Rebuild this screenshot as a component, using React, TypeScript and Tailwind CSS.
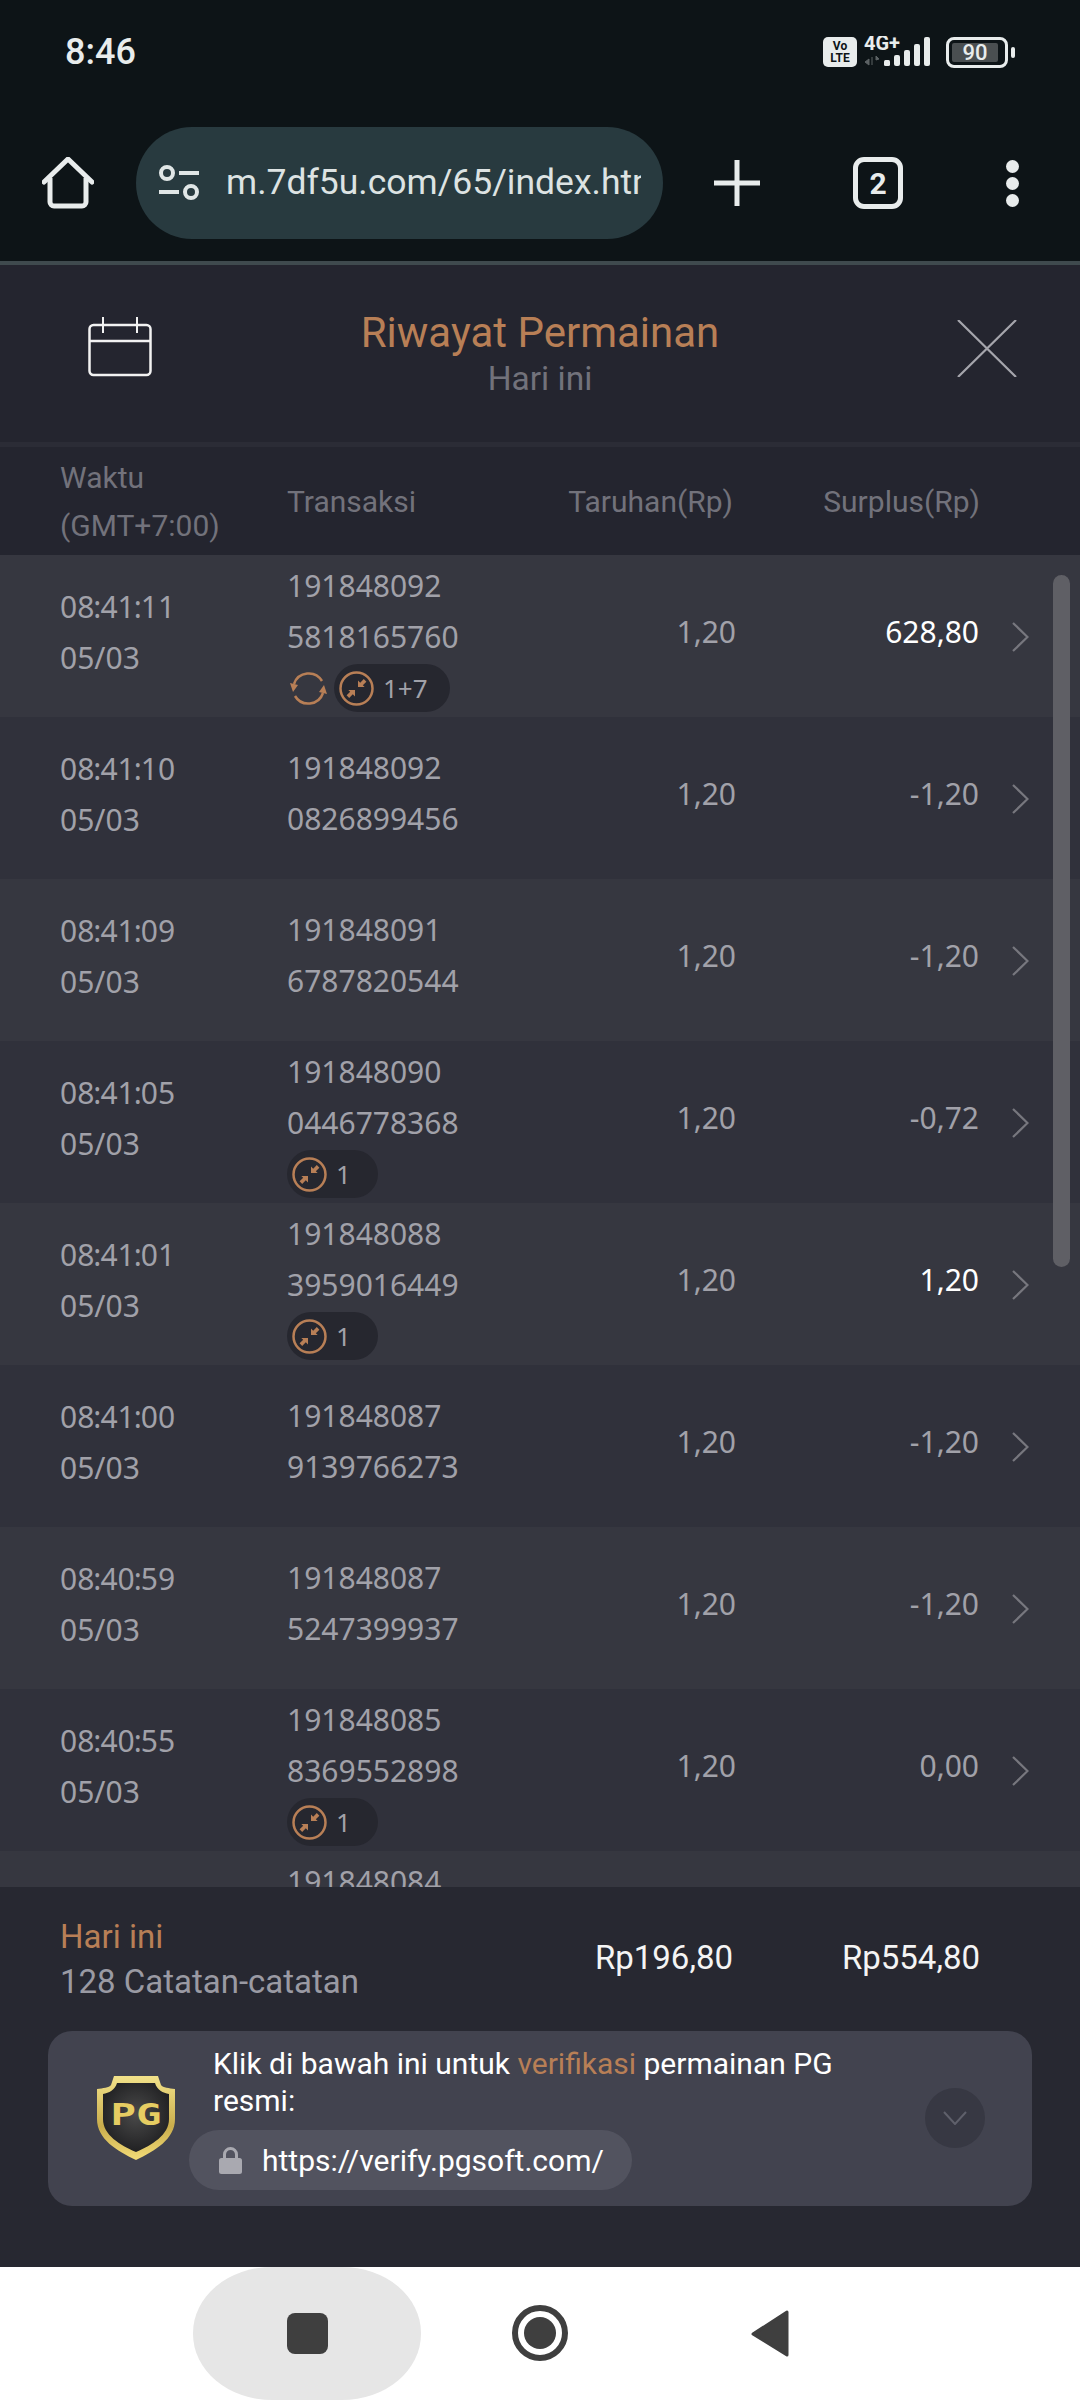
import React from "react";

type Row = { time: string; a: string; b: string; surplus: string; win?: boolean; pill?: string; retrigger?: boolean };

const rows: Row[] = [
  { time: "08:41:11", a: "191848092", b: "5818165760", surplus: "628,80", win: true, pill: "1+7", retrigger: true },
  { time: "08:41:10", a: "191848092", b: "0826899456", surplus: "-1,20" },
  { time: "08:41:09", a: "191848091", b: "6787820544", surplus: "-1,20" },
  { time: "08:41:05", a: "191848090", b: "0446778368", surplus: "-0,72", pill: "1" },
  { time: "08:41:01", a: "191848088", b: "3959016449", surplus: "1,20", win: true, pill: "1" },
  { time: "08:41:00", a: "191848087", b: "9139766273", surplus: "-1,20" },
  { time: "08:40:59", a: "191848087", b: "5247399937", surplus: "-1,20" },
  { time: "08:40:55", a: "191848085", b: "8369552898", surplus: "0,00", pill: "1" },
  { time: "08:40:54", a: "191848084", b: "4521907736", surplus: "-1,20", pill: "1" },
];

const StatusIcons = () => (
  <div className="flex items-center">
    <div className="flex h-[30px] w-[34px] flex-col items-center justify-center rounded-[5px] bg-[#e8ecec] font-['Roboto',sans-serif] text-[12px] leading-[12px] font-bold text-[#0d1417]">
      <span>Vo</span>
      <span>LTE</span>
    </div>
    <svg width="66" height="32" viewBox="0 0 66 32" className="ml-[7px]">
      <text x="0" y="14" fontFamily="Roboto, sans-serif" fontSize="20" fontWeight="700" fill="#e8ecec">4G+</text>
      <path d="M5 23v6l-4-3zM8 21v8M12 20l3 3-3 1z" fill="#5c6265" stroke="#5c6265" strokeWidth="1" />
      <rect x="20" y="24" width="6" height="6" rx="1.5" fill="#e8ecec" />
      <rect x="30" y="19" width="6" height="11" rx="2" fill="#e8ecec" />
      <rect x="40" y="14" width="6" height="16" rx="2" fill="#e8ecec" />
      <rect x="50" y="8" width="6" height="22" rx="2" fill="#e8ecec" />
      <rect x="60" y="1" width="6" height="29" rx="2" fill="#e8ecec" />
    </svg>
    <div className="ml-[16px] flex h-[31px] w-[62px] items-center rounded-[8px] border-[3px] border-[#e8ecec] p-[3px]">
      <div className="flex h-full w-[46px] items-center justify-center rounded-[2px] bg-[#4a4f51] font-['Roboto',sans-serif] text-[22px] font-medium text-[#e8ecec]">90</div>
    </div>
    <div className="ml-[3px] h-[11px] w-[4px] rounded-full bg-[#e8ecec]" />
  </div>
);

const BrowserBar = () => (
  <div className="flex h-[135px] items-start bg-[#0d1417] font-['Roboto',sans-serif]">
    <div className="flex w-[136px] justify-center pt-[30px]">
      <svg width="52" height="52" viewBox="0 0 52 52" fill="none">
        <path d="M2 25 26 2l24 23" stroke="#e8ecec" strokeWidth="5" strokeLinecap="round" strokeLinejoin="round" />
        <path d="M8 21v24a4 4 0 0 0 4 4h28a4 4 0 0 0 4-4V21" stroke="#e8ecec" strokeWidth="5" strokeLinejoin="round" />
      </svg>
    </div>
    <div className="flex h-[112px] w-[527px] items-center overflow-hidden rounded-full bg-[#283a3f] pr-[22px] pl-[22px]">
      <svg width="44" height="36" viewBox="0 0 44 36" fill="none" className="shrink-0">
        <circle cx="9" cy="8" r="6" stroke="#e0e6e6" strokeWidth="4" />
        <path d="M21 8h20M1 27h20" stroke="#e0e6e6" strokeWidth="4" />
        <circle cx="33" cy="27" r="6" stroke="#e0e6e6" strokeWidth="4" />
      </svg>
      <span className="ml-[24px] overflow-hidden text-[35.500px] whitespace-nowrap text-[#dde3e3]">m.7df5u.com/65/index.html</span>
    </div>
    <div className="flex h-[112px] w-[148px] items-center justify-center">
      <svg width="46" height="46" viewBox="0 0 46 46"><path d="M23 0v46M0 23h46" stroke="#e8ecec" strokeWidth="5" strokeLinecap="round" /></svg>
    </div>
    <div className="flex h-[112px] w-[134px] items-center justify-center">
      <div className="flex h-[52px] w-[50px] shrink-0 items-center justify-center rounded-[11px] border-[5px] border-[#e8ecec] text-[30px] font-bold text-[#e8ecec]">2</div>
    </div>
    <div className="flex h-[112px] w-[134px] flex-col items-center justify-center gap-[4px]">
      <div className="h-[13px] w-[13px] rounded-full bg-[#e8ecec]" />
      <div className="h-[13px] w-[13px] rounded-full bg-[#e8ecec]" />
      <div className="h-[13px] w-[13px] rounded-full bg-[#e8ecec]" />
    </div>
  </div>
);

const SpinIcon = () => (
  <svg width="37" height="37" viewBox="0 0 37 37" fill="none">
    <path d="M4 14A15.5 15.5 0 0 1 32 11" stroke="#b87f56" strokeWidth="2.5" />
    <path d="M33 23A15.5 15.5 0 0 1 5 26" stroke="#b87f56" strokeWidth="2.5" />
    <path d="M0 13l8 2-5 7zM37 24l-8-2 5-7z" fill="#b87f56" />
  </svg>
);

const FreeIcon = () => (
  <svg width="35" height="35" viewBox="0 0 35 35" fill="none">
    <circle cx="17.5" cy="17.5" r="16" stroke="#b87f56" strokeWidth="2.5" />
    <path d="M19 16V9.5l2.2 2.2 3.6-3.6 2.6 2.6-3.6 3.6 1.9 1.700zM16 19v6.500l-2.200-2.200-3.600 3.600-2.600-2.600 3.600-3.600-1.900-1.700z" fill="#b87f56" />
  </svg>
);

const Chevron = () => (
  <svg width="17" height="30" viewBox="0 0 17 30" fill="none">
    <path d="M1 1l14.500 14L1 29" stroke="#77777e" strokeWidth="2.200" />
  </svg>
);

const Time = ({ value }: { value: string }) => {
  const [h, m, s] = value.split(":");
  return (
    <div>
      {h}
      <span className="mx-[-1px]">:</span>
      {m}
      <span className="mx-[-1px]">:</span>
      {s}
    </div>
  );
};

const TableRow = ({ row, index }: { row: Row; index: number }) => (
  <div className={`flex h-[162px] shrink-0 items-center pl-[60px] font-['Noto_Sans',sans-serif] text-[30px] leading-[51px] text-[#a1a1a9] ${index % 2 === 0 ? "bg-[#363740]" : "bg-[#30313b]"}`}>
    <div className="w-[227px] pb-[8px]">
      <Time value={row.time} />
      <div>05/03</div>
    </div>
    <div className={`w-[190px] ${row.pill ? "" : "pb-[10px]"}`}>
      <div>{row.a}</div>
      <div>{row.b}</div>
      {row.pill && (
        <div className="mt-[2px] flex h-[48px] items-center">
          {row.retrigger && (
            <div className="mr-[7px] ml-[3px]"><SpinIcon /></div>
          )}
          <div className={`flex h-[48px] shrink-0 items-center rounded-full bg-[#26272f] pl-[5px] text-[26px] ${row.pill === "1" ? "w-[91px]" : "w-[116px]"}`}>
            <FreeIcon />
            <span className="ml-[9px]">{row.pill}</span>
          </div>
        </div>
      )}
    </div>
    <div className="w-[259px] pb-[10px] text-right">1,20</div>
    <div className={`w-[243px] pb-[10px] text-right ${row.win ? "text-white" : ""}`}>{row.surplus}</div>
    <div className="ml-[33px] flex pt-[2px]"><Chevron /></div>
  </div>
);

const Shield = () => (
  <svg width="78" height="85" viewBox="0 0 78 85">
    <defs>
      <linearGradient id="gold" x1="0" y1="0" x2="0" y2="1">
        <stop offset="0" stopColor="#f2e28a" />
        <stop offset="0.6" stopColor="#c9ad4c" />
        <stop offset="1" stopColor="#f3dc78" />
      </linearGradient>
      <radialGradient id="dark" cx="0.5" cy="0.45" r="0.6">
        <stop offset="0" stopColor="#4a4a4a" />
        <stop offset="1" stopColor="#1d1d1f" />
      </radialGradient>
    </defs>
    <path d="M17 1h44l3 9c2 3 8 3 14 4v30c0 20-20 32-39 41C20 76 0 64 0 44V14c6-1 12-1 14-4z" fill="url(#gold)" />
    <path d="M20 8h38c2 7 8 10 14 11v25c0 16-17 26-33 33C23 70 6 60 6 44V19c6-1 12-4 14-11z" fill="url(#dark)" />
    <text x="39" y="50" textAnchor="middle" fontFamily="'DejaVu Sans Mono', monospace" fontSize="31" fontWeight="700" textLength="51" lengthAdjust="spacingAndGlyphs" fill="#e6cd62">PG</text>
  </svg>
);

export default function App() {
  return (
    <div className="relative flex h-[2400px] w-[1080px] flex-col overflow-hidden bg-[#24252f]">
      <div className="flex h-[127px] shrink-0 items-start justify-between bg-[#0d1417] pt-[32px] pr-[65px] pl-[65px]">
        <span className="font-['Roboto',sans-serif] text-[36px] leading-[40px] font-medium text-[#e8ecec]">8:46</span>
        <div className="pt-[4px]"><StatusIcons /></div>
      </div>
      <BrowserBar />
      <div className="h-[4px] shrink-0 bg-[#3f4a4e]" />

      <div className="relative flex h-[177px] shrink-0 flex-col items-center bg-[#24252f] pt-[45px] font-['Roboto',sans-serif]">
        <div className="text-[42px] leading-[46px] text-[#b87f56]">Riwayat Permainan</div>
        <div className="text-[33.500px] leading-[46px] text-[#72727b]">Hari ini</div>
        <svg width="64" height="60" viewBox="0 0 64 60" fill="none" className="absolute top-[52px] left-[88px]">
          <rect x="1.500" y="8" width="61" height="50" rx="4" stroke="#f2f2f2" strokeWidth="2.500" />
          <path d="M1.500 24h61" stroke="#f2f2f2" strokeWidth="2.500" />
          <path d="M15 0v16M49 0v16" stroke="#f2f2f2" strokeWidth="2" />
        </svg>
        <svg width="60" height="57" viewBox="0 0 60 57" fill="none" className="absolute top-[55px] left-[957px]">
          <path d="M1 0l58 57M59 0L1 57" stroke="#a5a5ac" strokeWidth="2.200" />
        </svg>
      </div>
      <div className="h-[5px] shrink-0 bg-[#2b2c36]" />

      <div className="flex h-[108px] shrink-0 items-center bg-[#24252f] pt-[2px] pl-[60px] font-['Roboto',sans-serif] text-[30px] leading-[48px] text-[#72727b]">
        <div className="w-[227px]">
          <div>Waktu</div>
          <div>(GMT+7:00)</div>
        </div>
        <div className="w-[190px]">Transaksi</div>
        <div className="w-[256px] text-right">Taruhan(Rp)</div>
        <div className="w-[247px] text-right">Surplus(Rp)</div>
      </div>

      <div className="relative h-[1332px] shrink-0 overflow-hidden">
        <div className="flex flex-col">
          {rows.map((row, i) => (
            <TableRow key={row.time} row={row} index={i} />
          ))}
        </div>
        <div className="absolute top-[20px] left-[1053px] h-[692px] w-[17px] rounded-full bg-[#5f5f65]" />
      </div>

      <div className="flex h-[380px] shrink-0 flex-col bg-[#272831] px-[48px] font-['Roboto',sans-serif]">
        <div className="flex h-[144px] shrink-0 items-center pl-[12px] text-[33px] leading-[45px]">
          <div className="w-[417px]">
            <div className="text-[#b87f56]">Hari ini</div>
            <div className="text-[#9a9aa3]">128 Catatan-catatan</div>
          </div>
          <div className="w-[256px] pb-[4px] text-right text-[#f4f4f4]">Rp196,80</div>
          <div className="w-[247px] pb-[4px] text-right text-[#f4f4f4]">Rp554,80</div>
        </div>
        <div className="flex h-[175px] items-start rounded-[24px] bg-[#42434f]">
          <div className="mt-[44px] ml-[49px] shrink-0"><Shield /></div>
          <div className="ml-[-8px] w-[720px]">
            <div className="pt-[14px] pl-[46px] text-[30px] leading-[37px] text-white">
              Klik di bawah ini untuk <span className="text-[#b87f56]">verifikasi</span> permainan PG resmi:
            </div>
            <div className="mt-[11px] ml-[22px] flex h-[60px] w-[443px] items-center rounded-full bg-[#52535f] pl-[30px]">
              <svg width="23" height="27" viewBox="0 0 23 27" fill="none" className="shrink-0">
                <path d="M5.500 12V7.500a6 6 0 0 1 12 0V12" stroke="#a9a9b0" strokeWidth="3" />
                <rect x="0" y="11" width="23" height="16" rx="2.500" fill="#a9a9b0" />
              </svg>
              <span className="ml-[20px] text-[30px] whitespace-nowrap text-white">https://verify.pgsoft.com/</span>
            </div>
          </div>
          <div className="mt-[57px] mr-[47px] ml-auto flex h-[60px] w-[60px] shrink-0 items-center justify-center rounded-full bg-[#373843]">
            <svg width="24" height="14" viewBox="0 0 24 14" fill="none"><path d="M1 1l11 12L23 1" stroke="#5f606b" strokeWidth="2" /></svg>
          </div>
        </div>
      </div>

      <div className="relative flex h-[133px] shrink-0 items-center bg-white">
        <div className="absolute top-0 left-[193px] h-[133px] w-[228px] rounded-[79px/66px] bg-[#e6e6e6]" />
        <div className="absolute top-[46px] left-[287px] h-[41px] w-[41px] rounded-[8px] bg-[#3f3f3f]" />
        <div className="absolute top-[38px] left-[512px] flex h-[56px] w-[56px] items-center justify-center rounded-full border-[6px] border-[#3f3f3f]">
          <div className="h-[32px] w-[32px] rounded-full bg-[#3f3f3f]" />
        </div>
        <svg width="38" height="47" viewBox="0 0 38 47" className="absolute top-[43px] left-[751px]">
          <path d="M36 2v43L2 24z" fill="#3f3f3f" stroke="#3f3f3f" strokeWidth="3" strokeLinejoin="round" />
        </svg>
      </div>
    </div>
  );
}
